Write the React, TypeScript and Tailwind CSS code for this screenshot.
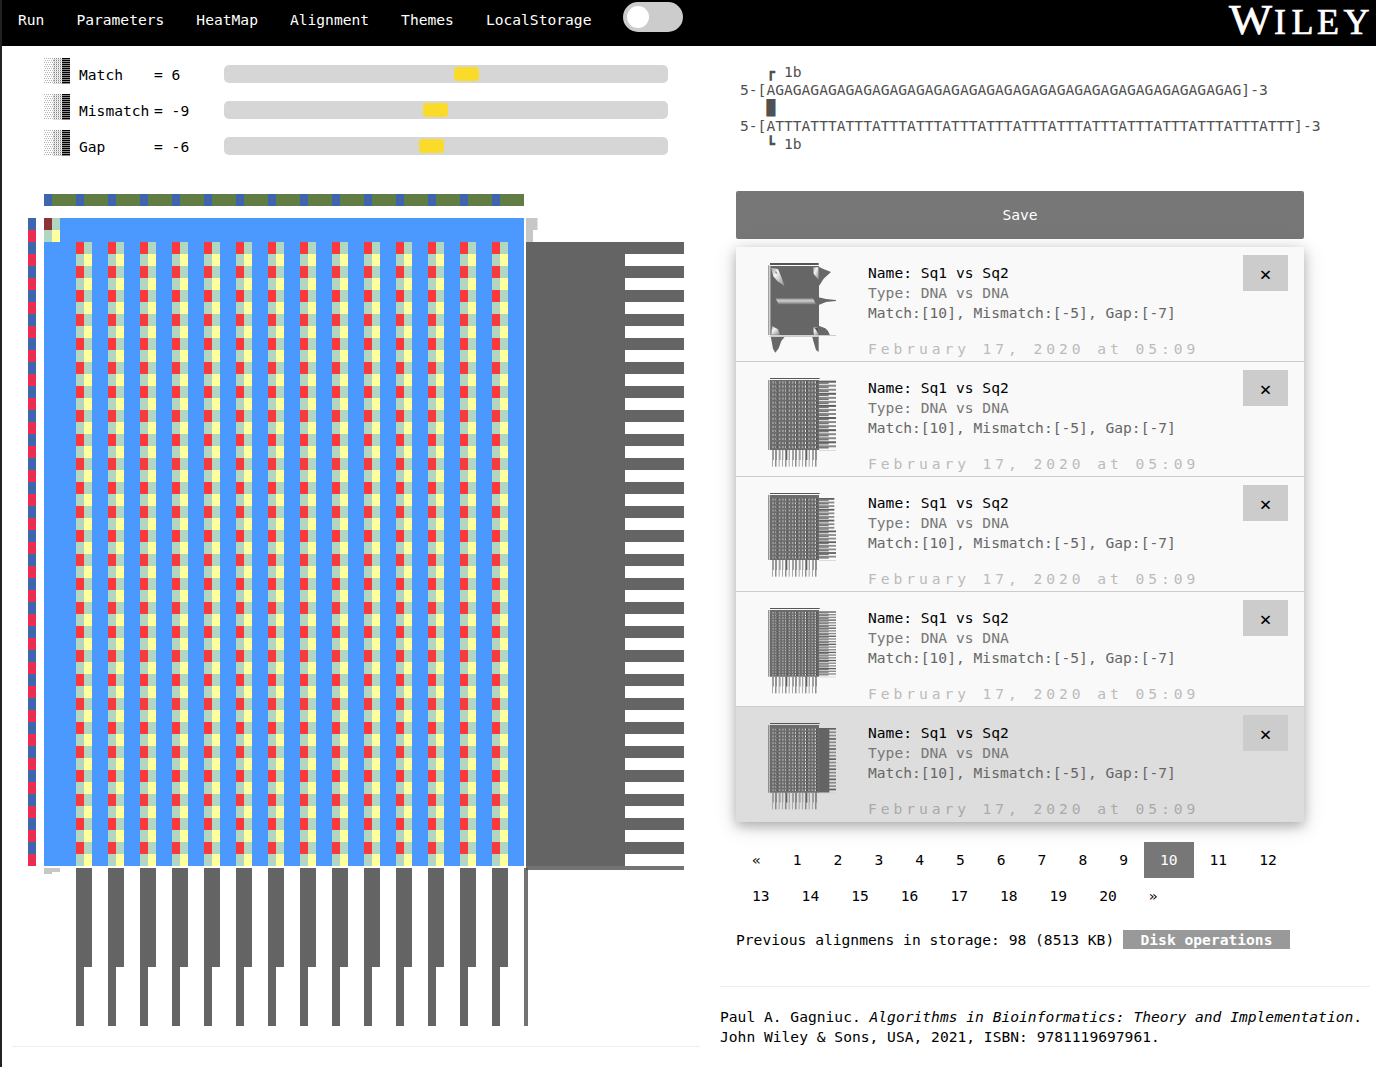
import React from 'react';

const NAV = ['Run', 'Parameters', 'HeatMap', 'Alignment', 'Themes', 'LocalStorage'];

const PARAMS = [
  { label: 'Match', value: '6', pos: 230 },
  { label: 'Mismatch', value: '-9', pos: 199 },
  { label: 'Gap', value: '-6', pos: 195 },
];

const range = (n: number) => Array.from({ length: n }, (_, i) => i);

function Shade() {
  return (
    <svg width="27" height="27" viewBox="0 0 27 27" shapeRendering="crispEdges" className="shrink-0">
      {range(13).map((r) => (
        <g key={r}>
          {range(5).map((c) => (
            <rect key={c} x={c * 2 + (r % 2)} y={r * 2} width="1" height="1" fill="#b4b4b4" />
          ))}
          {range(4).map((c) => (
            <rect key={c} x={10 + c * 2} y={r * 2} width="1" height="1" fill="#858585" />
          ))}
          <rect x="9" y={r * 2 + 1} width="9" height="1" fill="#dedede" />
          <rect x="18" y={r * 2} width="8" height="1" fill="#000" />
          <rect x="18" y={r * 2 + 1} width="8" height="1" fill="#8a8a8a" />
        </g>
      ))}
    </svg>
  );
}

function Header() {
  return (
    <header className="flex h-[46px] justify-between bg-black text-white">
      <div className="flex">
        <nav className="flex">
          {NAV.map((n) => (
            <a key={n} className="h-10 px-4 leading-[39px]">{n}</a>
          ))}
        </nav>
        <div className="mt-[2px] ml-4 flex h-[30px] w-[60px] items-center rounded-full bg-[#ccc] pl-1">
          <div className="size-[22px] rounded-full bg-white" />
        </div>
      </div>
      <svg width="148" height="46" viewBox="0 0 148 46" overflow="visible" fill="#fff" fontFamily="Liberation Serif, serif" stroke="#fff" strokeWidth="0.7">
        <text x="1" y="34.3" fontSize="43" textLength="43" lengthAdjust="spacingAndGlyphs">W</text>
        <text x="46 63.5 89 115.5" y="34.3" fontSize="36">ILEY</text>
      </svg>
    </header>
  );
}

function HeatMap() {
  return (
    <svg width="656" height="832" viewBox="28 194 656 832" shapeRendering="crispEdges" className="block">
      {range(60).map((c) => (
        <rect key={c} x={44 + c * 8} y="194" width="8" height="12" fill={c % 4 === 0 ? '#3f65ad' : '#627c46'} />
      ))}
      {range(54).map((r) => (
        <rect key={r} x="28" y={218 + r * 12} width="8" height="12" fill={r % 2 ? '#eb2d54' : '#3f65ad'} />
      ))}
      <rect x="44" y="218" width="480" height="648" fill="#4b99ff" />
      <rect x="44" y="218" width="16" height="24" fill="#b1d6c2" />
      <rect x="44" y="218" width="8" height="12" fill="#8f3234" />
      <rect x="52" y="230" width="8" height="12" fill="#ffff9b" />
      {range(14).map((c) => (
        <g key={c}>
          <rect x={76 + c * 32} y="242" width="16" height="624" fill="#b1d6c2" />
          {range(26).map((r) => (
            <g key={r}>
              <rect x={76 + c * 32} y={242 + r * 24} width="8" height="12" fill="#f93a3d" />
              <rect x={84 + c * 32} y={254 + r * 24} width="8" height="12" fill="#ffff9b" />
            </g>
          ))}
          <rect x={76 + c * 32} y="868" width="16" height="99" fill="#646464" />
          <rect x={76 + c * 32} y="967" width="8" height="59" fill="#646464" />
        </g>
      ))}
      <rect x="526" y="218" width="11" height="12" fill="#c7c7c7" />
      <rect x="537" y="218" width="1" height="12" fill="#e3e3e3" />
      <rect x="526" y="230" width="7" height="12" fill="#c7c7c7" />
      <rect x="526" y="242" width="99" height="624" fill="#646464" />
      {range(26).map((r) => (
        <rect key={r} x="625" y={242 + r * 24} width="59" height="12" fill="#646464" />
      ))}
      <rect x="44" y="868" width="16" height="4" fill="#c7c7c7" />
      <rect x="44" y="872" width="8" height="2" fill="#c7c7c7" />
      <rect x="526" y="866" width="158" height="4" fill="#737373" />
      <rect x="524" y="868" width="4" height="158" fill="#737373" />
      <rect x="526" y="868" width="2" height="2" fill="#555" />
    </svg>
  );
}

function BlobThumb() {
  return (
    <svg width="70" height="96" viewBox="96 60 210 288" className="shrink-0">
      <defs>
        <linearGradient id="ridge" x1="0" y1="0" x2="0" y2="1">
          <stop offset="0" stopColor="#888" />
          <stop offset="0.4" stopColor="#d0d0d0" />
          <stop offset="1" stopColor="#777" />
        </linearGradient>
        <linearGradient id="glow" x1="0" y1="0" x2="1" y2="1">
          <stop offset="0" stopColor="#999" />
          <stop offset="0.35" stopColor="#f4f4f4" />
          <stop offset="1" stopColor="#888" />
        </linearGradient>
      </defs>
      <path d="M102 69h146v6H102z" fill="#555" />
      <path d="M97 76h3v209h-3z" fill="#777" />
      <path d="M103 78h146v208H103z" fill="#666" />
      <path d="M105 83l21 4 10 24 10 28-22-16-12-14z" fill="url(#glow)" />
      <path d="M119 92l6 10-7-3z" fill="#777" />
      <path d="M231 82h17v38l-15-18z" fill="url(#glow)" />
      <path d="M118 175h113l9 18H128z" fill="url(#ridge)" />
      <path d="M106 284l2-26 18 10 6 16z" fill="url(#glow)" />
      <path d="M231 262l17 2v22h-14z" fill="url(#glow)" />
      <path d="M236 264l12 18v-18z" fill="#555" />
      <path d="M248 80l16 8 21 8-22 20-14 22zM248 172l22 5 30 3v3l-30 3-22 9zM248 257l20 8 8 8 6 13h-34zM104 288h44l-12 15-8 22-10 13-7-12zM228 288h20v48l-8-6-8-27z" fill="#686868" />
      <path d="M248 285h52v3h-52zM100 288h148v3H100z" fill="#ccc" />
    </svg>
  );
}

type Grid = { top: number; bottom: number; step: number; solid: boolean; fan: boolean };

function GridThumb({ top, bottom, step: target, solid, fan }: Grid) {
  const count = Math.round((bottom - top - 4) / target);
  const step = (bottom - top - 4) / count;
  return (
    <svg width="70" height="96" viewBox="96 60 210 288" className="shrink-0">
      <path d="M102 69h149v3H102z" fill="#555" />
      <path d={`M97 75h3v${bottom - 75}h-3z`} fill="#666" />
      <path d={`M102 75h147v${bottom - 75}H102z`} fill="#6b6b6b" />
      {range(count).map((r) => (
        <g key={r}>
          {range(14).map((c) => (
            <rect key={c} x={109 + c * 9.8} y={top + 4 + r * step} width={c % 3 === 1 ? 3 : 4.5} height={step * 0.55} fill={c % 3 === 1 ? '#e8e8e8' : '#a6a6a6'} />
          ))}
          {range(5).map((c) => (
            <rect key={c} x={121 + c * 30} y={top + 4 + r * step} width="3" height={step * 0.5} fill="#3f3f3f" />
          ))}
          <rect x="249" y={top + 2 + r * step} width={fan && r < count / 2 ? 46 : 51} height={step * 0.5} fill={r % 3 ? '#8a8a8a' : '#606060'} />
          <rect x="249" y={top + 2 + r * step + step * 0.4} width="29" height={step * 0.4} fill="#777" />
        </g>
      ))}
      {solid && <rect x="249" y={top + 5} width="31" height={bottom - top - 5} fill="#646464" />}
      <rect x="249" y={bottom} width="51" height="2" fill="#ccc" />
      {range(14).map((c) => (
        <g key={c}>
          <rect x={108 + c * 10} y={bottom} width={c % 2 ? 4 : 6} height="30" fill={c % 3 === 1 ? '#5e5e5e' : '#a0a0a0'} />
          <rect x={108 + c * 10} y={bottom + 30} width="3" height="20" fill={c % 3 === 1 ? '#5e5e5e' : '#a8a8a8'} />
        </g>
      ))}
    </svg>
  );
}

const ITEMS: (Grid | null)[] = [
  null,
  { top: 75, bottom: 285, step: 12, solid: false, fan: false },
  { top: 82, bottom: 270, step: 11, solid: false, fan: true },
  { top: 77, bottom: 275, step: 8, solid: false, fan: false },
  { top: 82, bottom: 278, step: 10, solid: true, fan: false },
];

function SavedList() {
  return (
    <ul className="mt-2 w-[568px] bg-[#f9f9f9] shadow-[0_4px_10px_0_rgba(0,0,0,0.2),0_4px_20px_0_rgba(0,0,0,0.19)]">
      {ITEMS.map((g, i) => (
        <li key={i} className={i === 4 ? 'flex h-[115px] bg-[#ddd] pl-8' : 'flex h-[115px] border-b border-[#ccc] pl-8'}>
          <div className="mt-[13px] h-24">{g ? <GridThumb {...g} /> : <BlobThumb />}</div>
          <div className="ml-[30px] flex-1 pt-4 leading-5 whitespace-pre text-[#777]">
            <div className="text-black">Name: Sq1 vs Sq2</div>
            <div>Type: DNA vs DNA</div>
            <div className="text-[#666]">Match:[10], Mismatch:[-5], Gap:[-7]</div>
            <div className={i === 4 ? 'mt-4 tracking-[3.94px] text-[#aaa]' : 'mt-4 tracking-[3.94px] text-[#bbb]'}>February 17, 2020 at 05:09</div>
          </div>
          <button className="mt-2 mr-4 h-9 w-[45px] bg-[#ccc] pt-0.5 text-[20px] leading-none text-black">×</button>
        </li>
      ))}
    </ul>
  );
}

const PAGES = ['«', ...range(20).map((i) => String(i + 1)), '»'];

export default function App() {
  return (
    <div className="h-[1067px] w-[1376px] overflow-hidden border-l-2 border-[#222] bg-white font-['DejaVu_Sans_Mono',monospace] text-[14.61px] text-black">
      <Header />
      <main className="flex">
        <section className="w-[718px] pt-[10px]">
          <div className="pl-[42px]">
            {PARAMS.map((p) => (
              <div key={p.label} className="flex h-9">
                <div className="mt-[2px]"><Shade /></div>
                <div className="ml-[8px] w-[75px] leading-[38px]">{p.label}</div>
                <div className="w-[70px] leading-[38px]">= {p.value}</div>
                <div className="mt-[9px] h-[18px] w-[444px] rounded-[5px] bg-[#d6d6d6] pt-[2px]">
                  <div className="h-[14px] w-[25px] rounded-[4px] bg-[#fbdb29]" style={{ marginLeft: p.pos }} />
                </div>
              </div>
            ))}
          </div>
          <div className="mt-[30px] ml-[26px]"><HeatMap /></div>
          <hr className="mt-5 mr-5 ml-[10px] border-[#eee]" />
        </section>
        <section className="w-[650px]">
          <pre className="mt-[17px] ml-5 h-[90px] font-['DejaVu_Sans_Mono',monospace] leading-[18px] text-[#505050]">
            {`   ┏ 1b\n5-[${'AG'.repeat(27)}]-3\n   █\n5-[${'ATTT'.repeat(15)}]-3\n   ┗ 1b`}
          </pre>
          <div className="ml-4 w-[568px]">
            <button className="mt-[38px] block h-12 w-full rounded-[2px] bg-[#777] text-white">Save</button>
            <SavedList />
            <div className="mt-5 flex flex-wrap">
              {PAGES.map((p) => (
                <a key={p} className={p === '10' ? 'h-9 bg-[#777] px-4 leading-9 text-white' : 'h-9 px-4 leading-9'}>{p}</a>
              ))}
            </div>
            <div className="mt-4 flex h-[19px] justify-between pr-[14px] leading-[20px] whitespace-nowrap">
              <span>Previous alignmens in storage: 98 (8513 KB)</span>
              <span className="w-[167px] bg-[#999] text-center font-bold text-white">Disk operations</span>
            </div>
          </div>
          <hr className="mt-[37px] border-[#eee]" />
          <p className="mt-5 leading-5 whitespace-nowrap">
            Paul A. Gagniuc. <i>Algorithms in Bioinformatics: Theory and Implementation</i>.
            <br />
            John Wiley &amp; Sons, USA, 2021, ISBN: 9781119697961.
          </p>
        </section>
      </main>
    </div>
  );
}
